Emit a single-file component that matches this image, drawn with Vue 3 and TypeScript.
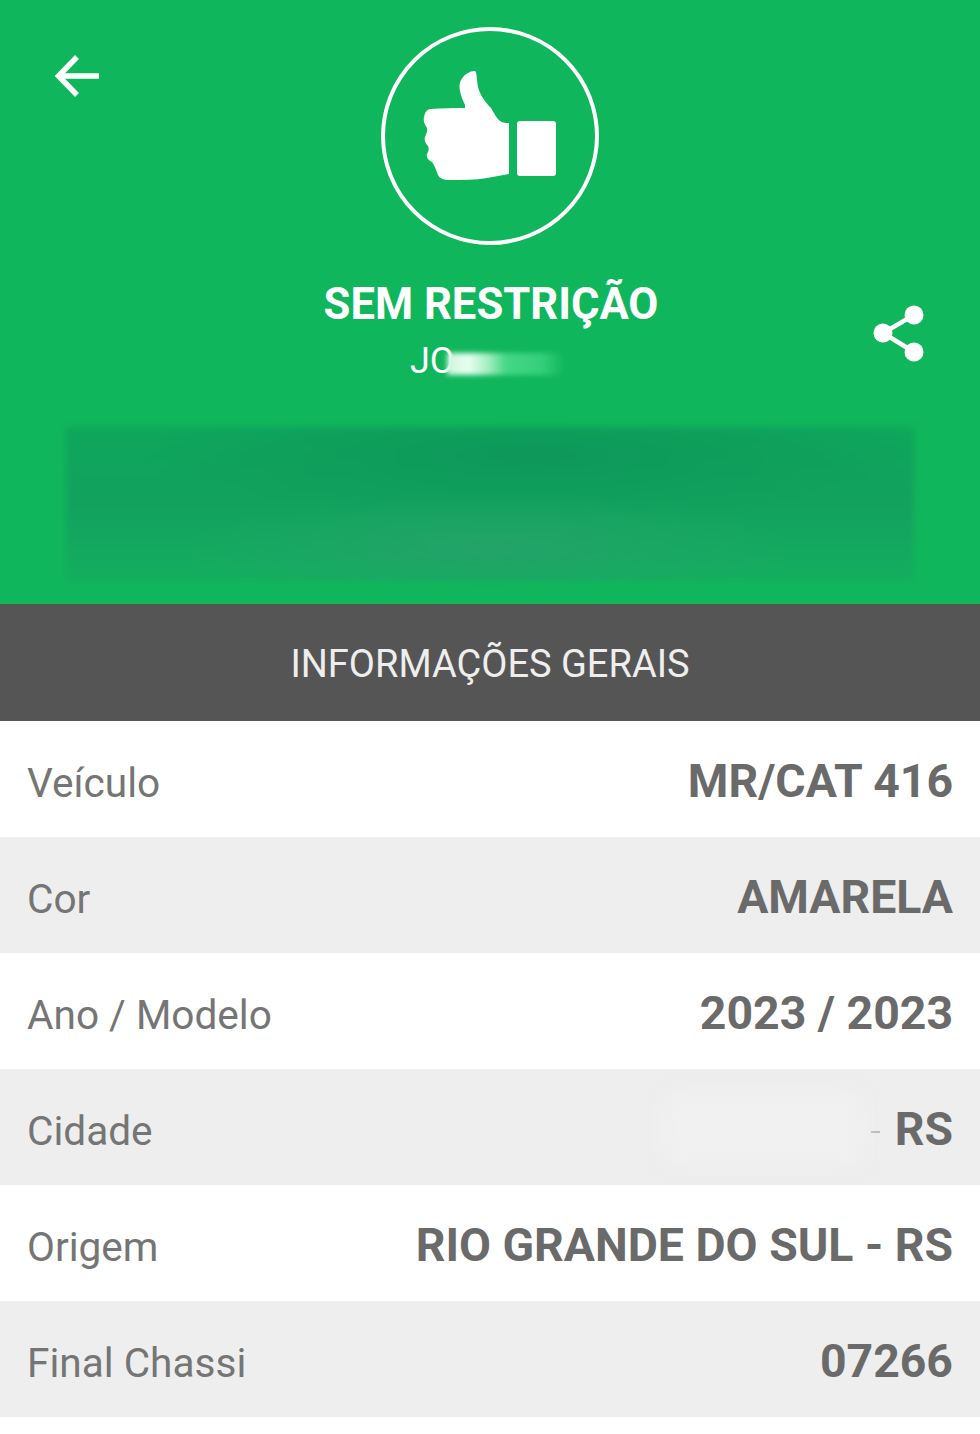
<script setup lang="ts">
interface InfoRow {
  label: string
  value: string
  hidden?: boolean
}

const rows: InfoRow[] = [
  { label: 'Veículo', value: 'MR/CAT 416' },
  { label: 'Cor', value: 'AMARELA' },
  { label: 'Ano / Modelo', value: '2023 / 2023' },
  { label: 'Cidade', value: 'RS', hidden: true },
  { label: 'Origem', value: 'RIO GRANDE DO SUL - RS' },
  { label: 'Final Chassi', value: '07266' },
]
</script>

<template>
  <div class="page">
    <header class="hero">
      <div class="hero-top">
        <button class="back" type="button" aria-label="Voltar">
          <svg width="48" height="48" viewBox="0 0 48 48" fill="none" stroke="#fff" stroke-width="5.4">
            <path d="M46 24H7" />
            <path d="M24 5 5.500 24 24 43" />
          </svg>
        </button>

        <div class="status">
          <div class="status-ring">
            <svg width="134" height="112" viewBox="0 0 134 112" fill="#fff">
              <path d="M42 35C40 31 38 26 37 21C35 13 39 6 45 3C48 1 52 0 53 2C54 7 54 12 55 17C57 25 62 32 68 38C71 43 74 49 77 51C80 53 83 53 86 53V104C79 105 71 107 64 108C52 110 39 110 27 110C21 110 17 109 15 105C13 100 12 96 9 92C5 90 3 87 4 84C6 81 6 78 5 76C2 73 1 70 2 67C3 64 5 61 4 58C2 55 0 51 1 47C2 42 4 39 8 39C19 38 31 38 42 38Z" />
              <rect x="94" y="51" width="39" height="55" rx="3" />
            </svg>
          </div>
          <h1 class="status-title">SEM RESTRIÇÃO</h1>
          <p class="status-name">
            <span>JO</span>
            <span class="name-smear"></span>
          </p>
        </div>

        <button class="share" type="button" aria-label="Compartilhar">
          <svg width="52" height="58" viewBox="0 0 52 58" fill="#fff">
            <path d="M41 10 10 28l31 19" fill="none" stroke="#fff" stroke-width="4.5" />
            <circle cx="41" cy="10" r="9.500" />
            <circle cx="10" cy="28" r="9.500" />
            <circle cx="41" cy="47" r="9.500" />
          </svg>
        </button>
      </div>

      <div class="plate-mask"></div>
    </header>

    <div class="section-title">INFORMAÇÕES GERAIS</div>

    <section class="info">
      <div v-for="row in rows" :key="row.label" class="info-row">
        <span class="info-label">{{ row.label }}</span>
        <span class="info-value">
          <template v-if="row.hidden">
            <span class="value-smear"></span>
            <span class="value-dash"></span>
          </template>
          <span>{{ row.value }}</span>
        </span>
      </div>
    </section>
  </div>
</template>

<style>
html,
body {
  margin: 0;
  background: #fff;
}
</style>

<style scoped>
.page {
  width: 980px;
  height: 1434px;
  overflow: hidden;
  font-family: Roboto, "Liberation Sans", sans-serif;
  background: #fff;
}

.hero {
  height: 604px;
  box-sizing: border-box;
  padding-top: 27px;
  background: #10b65c;
  overflow: hidden;
}

.hero-top {
  display: grid;
  grid-template-columns: 1fr auto 1fr;
  height: 400px;
}

.back,
.share {
  padding: 0;
  border: 0;
  background: none;
  line-height: 0;
}

.back {
  justify-self: start;
  align-self: start;
  margin: 25px 0 0 53px;
}

.share {
  justify-self: end;
  align-self: start;
  margin: 278px 55px 0 0;
}

.status {
  display: flex;
  flex-direction: column;
  align-items: center;
  color: #fff;
}

.status-ring {
  display: flex;
  align-items: center;
  justify-content: center;
  box-sizing: border-box;
  width: 218px;
  height: 218px;
  padding-bottom: 20px;
  border: 4px solid #fff;
  border-radius: 50%;
}

.status-title {
  margin: 34px 0 0;
  padding-left: 2px;
  font-size: 43.6px;
  line-height: 52px;
  font-weight: 700;
}

.status-name {
  display: flex;
  align-items: center;
  width: 160px;
  margin: 10px 0 0;
  font-size: 36px;
  line-height: 40px;
}

.name-smear {
  width: 118px;
  height: 22px;
  margin: 6px 0 0 -8px;
  background: linear-gradient(90deg, #cdf5dc 0%, #e8fff0 18%, #a8efc4 34%, #45d785 50%, #35cf7c 80%, rgba(53, 207, 124, 0) 100%);
  filter: blur(2.5px);
}

.plate-mask {
  width: 848px;
  height: 154px;
  margin: 0 auto;
  background:
    radial-gradient(ellipse 300px 55px at 50% 78%, #23a369 0%, rgba(35, 163, 105, 0) 100%),
    radial-gradient(ellipse 400px 70px at 55% 18%, #0e985b 0%, rgba(14, 152, 91, 0) 100%),
    linear-gradient(180deg, #0ea75b 0%, #12a25e 50%, #14ae5f 100%);
  filter: blur(3px);
}

.section-title {
  height: 117px;
  box-sizing: border-box;
  padding-top: 2px;
  display: flex;
  align-items: center;
  justify-content: center;
  background: #555;
  color: #eee;
  font-size: 38px;
}

.info-row {
  display: flex;
  align-items: center;
  justify-content: space-between;
  height: 116px;
  box-sizing: border-box;
  padding: 3px 27px 0;
  background: #fff;
}

.info-row:nth-child(even) {
  background: #eee;
}

.info-label {
  padding-top: 4px;
  color: #757575;
  font-size: 40.6px;
}

.info-value {
  display: flex;
  align-items: center;
  padding-top: 1px;
  color: #6a6a6a;
  font-size: 46.4px;
  font-weight: 700;
}

.value-smear {
  width: 195px;
  height: 70px;
  margin-right: 10px;
  background: #f1f1f1;
  filter: blur(10px);
}

.value-dash {
  width: 9px;
  height: 2px;
  margin: 6px 15px 0 0;
  background: #bbb;
}
</style>
